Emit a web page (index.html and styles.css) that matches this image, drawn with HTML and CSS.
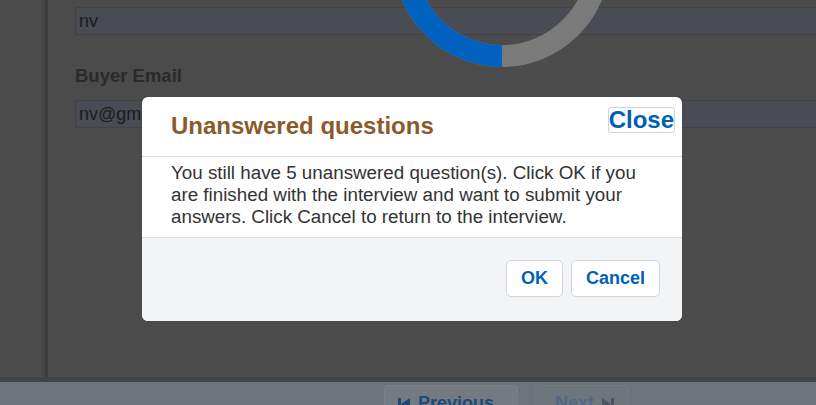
FILE: index.html
```html
<!DOCTYPE html>
<html lang="en">
<head>
<meta charset="utf-8">
<title>Interview</title>
<link rel="stylesheet" href="styles.css">
</head>
<body>
<div class="page">
  <div class="layout">
    <aside class="sidebar"></aside>
    <main class="content">
      <div class="field">nv</div>
      <div class="label">Buyer Email</div>
      <div class="field">nv@gmail.com</div>
    </main>
  </div>
  <footer class="navbar">
    <button class="nav-btn prev">
      <svg class="nav-icon" viewBox="0 0 12 12" width="12" height="12"><rect x="0" y="0" width="3" height="12" fill="currentColor"/><polygon points="12,0 12,12 3,6" fill="currentColor"/></svg>
      Previous
    </button>
    <button class="nav-btn next">
      Next
      <svg class="nav-icon" viewBox="0 0 12 12" width="12" height="12"><polygon points="0,0 9,6 0,12" fill="currentColor"/><rect x="9" y="0" width="3" height="12" fill="currentColor"/></svg>
    </button>
  </footer>
</div>

<svg class="spinner" viewBox="0 0 216 216" width="216" height="216">
  <circle cx="108" cy="108" r="97" fill="none" stroke="#7a7a7a" stroke-width="22"/>
  <path d="M 108 205 A 97 97 0 0 1 108 11" fill="none" stroke="#0062be" stroke-width="22"/>
</svg>

<div class="dialog" role="dialog">
  <div class="dialog-header">
    <h2 class="dialog-title">Unanswered questions</h2>
    <button class="close-btn">Close</button>
  </div>
  <div class="dialog-body">You still have 5 unanswered question(s). Click OK if you are finished with the interview and want to submit your answers. Click Cancel to return to the interview.</div>
  <div class="dialog-footer">
    <button class="btn">OK</button>
    <button class="btn">Cancel</button>
  </div>
</div>
</body>
</html>
```

FILE: styles.css
```css
html, body {
  margin: 0;
  padding: 0;
}
body {
  width: 816px;
  height: 405px;
  overflow: hidden;
  background: #4b4b4b;
  font-family: "Liberation Sans", Arial, sans-serif;
  position: relative;
}
.page {
  display: flex;
  flex-direction: column;
  height: 405px;
}
.layout {
  display: flex;
  flex: 1;
  min-height: 0;
}
.sidebar {
  width: 42px;
  border-right: 3px solid #444444;
  box-shadow: 3px 0 0 #3b3b3b;
  margin-right: 3px;
}
.content {
  flex: 1;
  padding: 7px 0 0 27px;
  overflow: hidden;
}
.field {
  height: 26px;
  border: 1px solid #404247;
  border-right: none;
  border-radius: 3px 0 0 3px;
  background: #4a4c53;
  color: #1b1b1c;
  font-size: 18px;
  line-height: 26px;
  padding-left: 3px;
  white-space: nowrap;
}
.label {
  font-size: 18.5px;
  font-weight: bold;
  line-height: 22px;
  color: #2a2a2a;
  margin: 30px 0 13px;
}
.navbar {
  height: 23px;
  border-top: 5px solid #3f4449;
  background: #6b737c;
  display: flex;
  align-items: flex-start;
  gap: 16px;
  padding-left: 384px;
  overflow: hidden;
}
.nav-btn {
  margin-top: 3px;
  height: 34px;
  border: 1px solid #7b8188;
  border-radius: 4px;
  background: #737a82;
  font-family: inherit;
  font-size: 18px;
  font-weight: bold;
  display: flex;
  align-items: flex-start;
  gap: 8px;
  padding: 6px 13px 0;
  line-height: 22px;
}
.nav-btn.prev {
  width: 134px;
  color: #1d4a7b;
}
.nav-btn.next {
  width: 95px;
  color: #4f6985;
  background: #6d757d;
  border-color: #737a81;
  padding-left: 20px;
}
.nav-btn.next .nav-icon {
  color: #4b5561;
}
.nav-icon {
  margin-top: 6px;
  flex: none;
}
.spinner {
  position: absolute;
  left: 394px;
  top: -149px;
}
.dialog {
  position: absolute;
  left: 142px;
  top: 97px;
  width: 540px;
  height: 224px;
  border-radius: 6px;
  background: #ffffff;
  overflow: hidden;
  display: flex;
  flex-direction: column;
}
.dialog-header {
  height: 59px;
  border-bottom: 1px solid #dedede;
  display: flex;
  justify-content: space-between;
  align-items: flex-start;
  padding: 0 7px 0 29px;
}
.dialog-title {
  margin: 15px 0 0;
  font-size: 24px;
  line-height: 28px;
  font-weight: bold;
  color: #8b5a2a;
}
.close-btn {
  margin-top: 10px;
  padding: 0;
  border: 1px solid #cfd3d8;
  border-radius: 3px;
  background: #ffffff;
  font-family: inherit;
  font-size: 24px;
  font-weight: bold;
  line-height: 24px;
  color: #0061b5;
  height: 26px;
}
.dialog-body {
  padding: 5px 29px 9px;
  font-size: 18.8px;
  line-height: 22px;
  color: #333333;
  height: 66px;
}
.dialog-footer {
  flex: 1;
  border-top: 1px solid #dedede;
  background: #f3f4f6;
  display: flex;
  justify-content: flex-end;
  align-items: flex-start;
  gap: 8px;
  padding: 22px 22px 0 0;
}
.btn {
  padding: 7px 14px;
  border: 1px solid #d2d5d9;
  border-radius: 5px;
  background: #ffffff;
  font-family: inherit;
  font-size: 18px;
  font-weight: bold;
  line-height: 21px;
  color: #0061b5;
}
```
